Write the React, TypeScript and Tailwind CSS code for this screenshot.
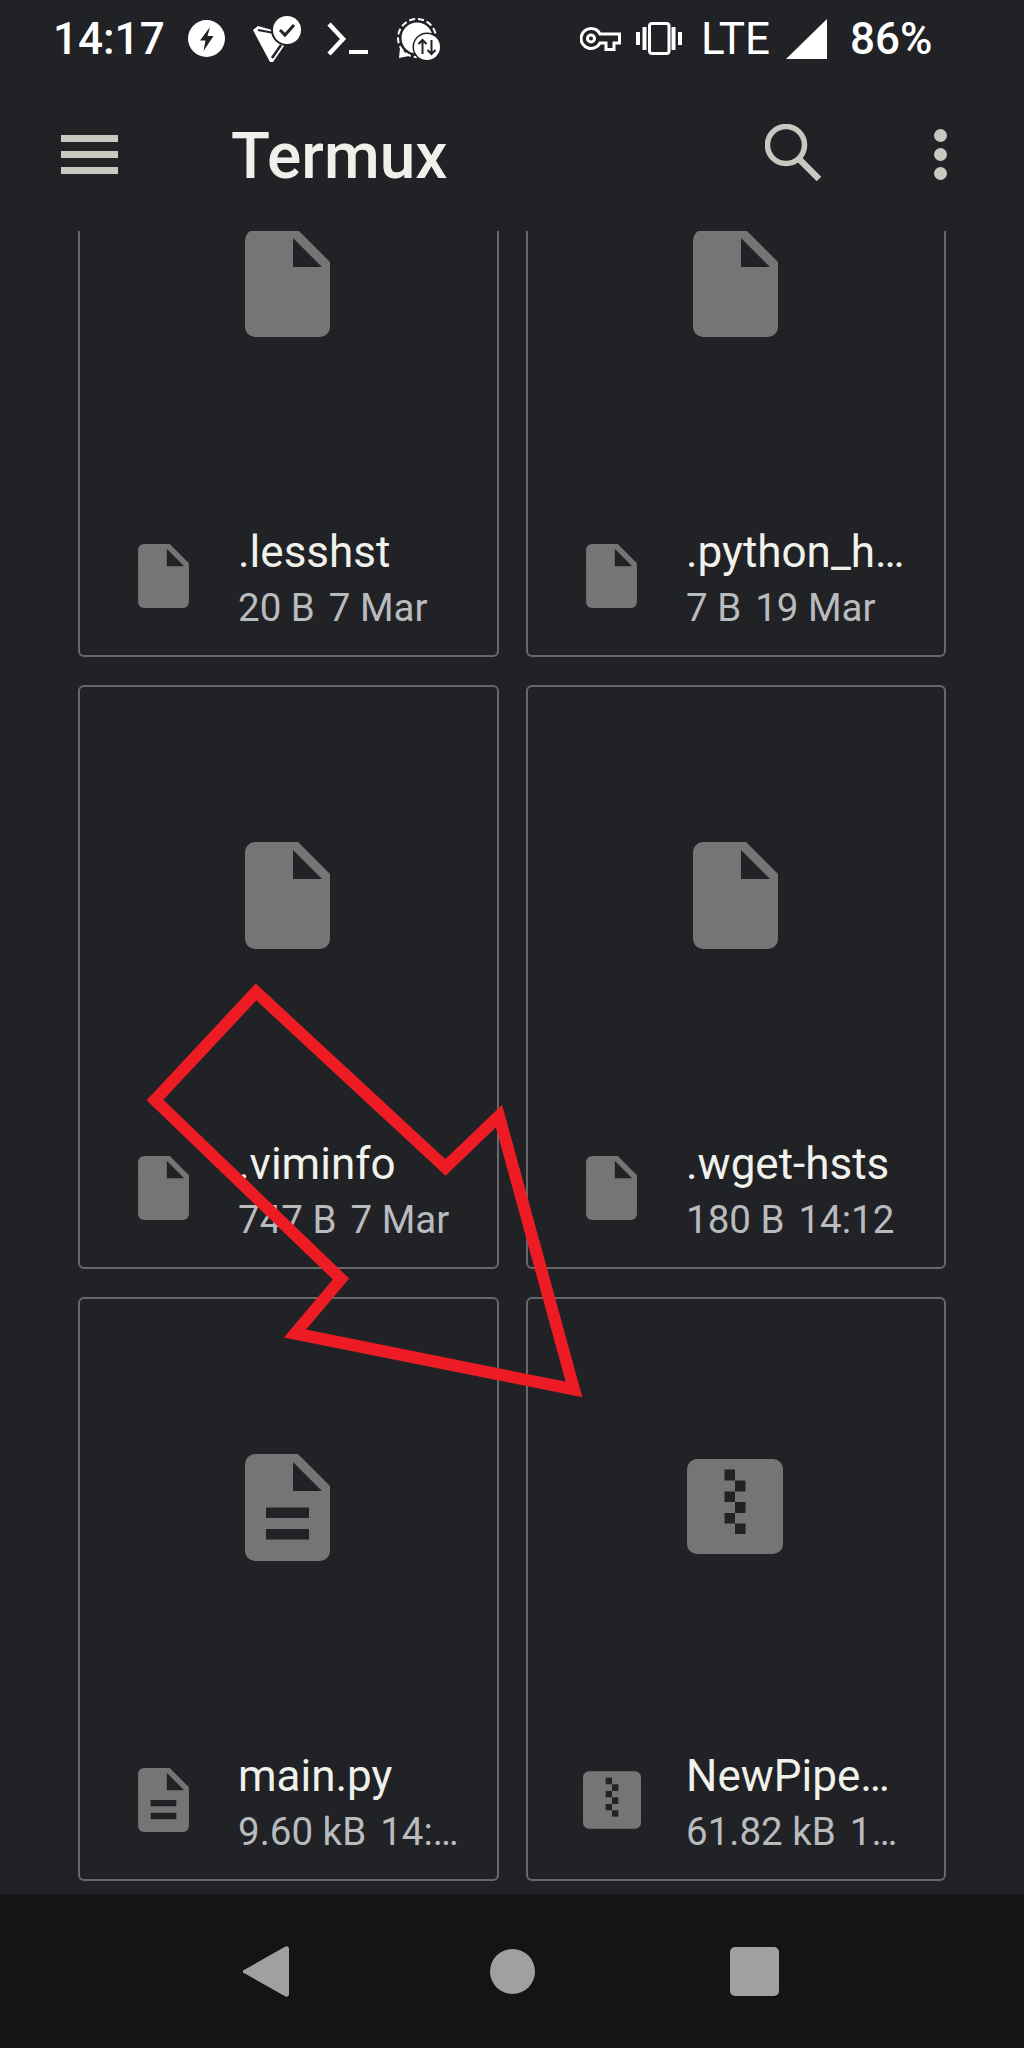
import React from "react";

type Kind = "file" | "doc" | "zip";

const files: { name: string; size: string; date: string; kind: Kind }[] = [
  { name: ".lesshst", size: "20 B", date: "7 Mar", kind: "file" },
  { name: ".python_h…", size: "7 B", date: "19 Mar", kind: "file" },
  { name: ".viminfo", size: "747 B", date: "7 Mar", kind: "file" },
  { name: ".wget-hsts", size: "180 B", date: "14:12", kind: "file" },
  { name: "main.py", size: "9.60 kB", date: "14:…", kind: "doc" },
  { name: "NewPipe…", size: "61.82 kB", date: "1…", kind: "zip" },
];

function FileIcon({ kind, small }: { kind: Kind; small?: boolean }) {
  if (kind === "zip") {
    return (
      <svg viewBox="0 0 96 95" className={small ? "h-[58px] w-[58px] shrink-0" : "-mt-[2px] h-[95px] w-[96px] shrink-0"}>
        <rect width="96" height="95" rx="10" fill="#757575" />
        <g fill="#212226">
          <rect x="37.5" y="10.5" width="10.5" height="11" />
          <rect x="48" y="21.5" width="10.5" height="11" />
          <rect x="37.5" y="32.5" width="10.5" height="10.5" />
          <rect x="48" y="43" width="10.5" height="11" />
          <rect x="37.5" y="54" width="10.5" height="10.5" />
          <rect x="48" y="64.5" width="10.5" height="10.5" />
        </g>
      </svg>
    );
  }
  return (
    <svg viewBox="0 0 85 107" className={small ? "h-[64px] w-[51px] shrink-0" : "h-[107px] w-[85px] shrink-0"}>
      <path
        d="M10 0H53L85 32V97a10 10 0 0 1-10 10H10a10 10 0 0 1-10-10V10a10 10 0 0 1 10-10Z"
        fill="#757575"
      />
      <path d="M48 8V37H77Z" fill="#212226" />
      {kind === "doc" && (
        <g fill="#212226">
          <rect x="21" y="53.5" width="43" height="10.5" />
          <rect x="21" y="75" width="43" height="10.5" />
        </g>
      )}
    </svg>
  );
}

function FileCard({ name, size, date, kind }: { name: string; size: string; date: string; kind: Kind }) {
  return (
    <div className="flex h-[584px] flex-col rounded-[6px] border-2 border-[#66686b] pb-[21px] pl-[58px]">
      <div className="-ml-[60px] mt-[155px] flex h-[107px] items-center justify-center">
        <FileIcon kind={kind} />
      </div>
      <div className="mt-auto flex">
        <div className="mt-[18px] flex h-[64px] w-[51px] shrink-0 items-center justify-center">
          <FileIcon kind={kind} small />
        </div>
        <div className="ml-[49px] min-w-0">
          <div className="text-[44px] leading-[53px] text-[#f0f1eb]">{name}</div>
          <div className="mt-[2px] flex gap-[14px] text-[38.5px] leading-[53px] text-[#b9bbbe]">
            <span>{size}</span>
            <span>{date}</span>
          </div>
        </div>
      </div>
    </div>
  );
}

function StatusBar() {
  return (
    <div className="flex h-[77px] items-center pl-[53px] text-[44px] leading-none font-medium text-white">
      <span className="w-[135px] shrink-0">14:17</span>

      {/* flash */}
      <svg viewBox="0 0 37 37" className="h-[37px] w-[37px] shrink-0">
        <circle cx="18.5" cy="18.5" r="18.5" fill="#fff" />
        <path d="M22 7 12 20.5h5.5L15.5 31 25.5 16H19.5L22 7Z" fill="#212226" />
      </svg>

      {/* filter check */}
      <svg viewBox="0 0 49 48" className="ml-[28px] h-[48px] w-[49px] shrink-0">
        <path d="M0 15 5 11 26 17 31 31 20 47 17 47Z" fill="#fff" />
        <path d="M5 15 21 18" stroke="#212226" strokeWidth="2" fill="none" />
        <path d="M19 43 28 30" stroke="#212226" strokeWidth="2.5" fill="none" />
        <circle cx="34" cy="15" r="16" fill="#212226" />
        <circle cx="34" cy="15" r="14" fill="#fff" />
        <path d="M27 15 32 20 41 10" stroke="#212226" strokeWidth="3" fill="none" />
      </svg>

      {/* terminal */}
      <svg viewBox="0 0 41 34" className="ml-[25px] h-[34px] w-[41px] shrink-0">
        <path d="M2 2 16 17 2 32" stroke="#fff" strokeWidth="4.5" fill="none" />
        <rect x="22" y="28" width="19" height="4" fill="#fff" />
      </svg>

      {/* signal */}
      <svg viewBox="0 0 44 44" className="ml-[29px] h-[44px] w-[44px] shrink-0">
        <circle cx="20" cy="21" r="19" stroke="#fff" strokeWidth="2" strokeDasharray="6 3" fill="none" />
        <circle cx="20" cy="21" r="15.5" fill="#fff" />
        <path d="M2 41 3 31 12 39Z" fill="#fff" />
        <circle cx="30" cy="30" r="14.5" fill="#212226" />
        <circle cx="30" cy="30" r="13" fill="#fff" />
        <path
          d="M25.500 37V23M21.500 27 25.500 23 29.500 27M34.500 23V37M30.500 33 34.500 37 38.500 33"
          stroke="#212226"
          strokeWidth="2"
          fill="none"
        />
      </svg>

      {/* key */}
      <svg viewBox="0 0 41 24" className="ml-[139px] h-[24px] w-[41px] shrink-0">
        <path
          d="M11 1.500a10 10 0 1 0 9 14.500h6v6.500h8V16h5.500V7H20a10 10 0 0 0-9-5.500Z"
          stroke="#fff"
          strokeWidth="3"
          fill="none"
        />
        <circle cx="11" cy="11.500" r="3.500" stroke="#fff" strokeWidth="3" fill="none" />
      </svg>

      {/* vibrate */}
      <svg viewBox="0 0 46 33" className="ml-[15px] h-[33px] w-[46px] shrink-0">
        <rect x="13.500" y="1.500" width="19.500" height="30" rx="2.500" stroke="#fff" strokeWidth="3" fill="none" />
        <rect x="0" y="10" width="4" height="13" fill="#fff" />
        <rect x="6.500" y="5" width="4" height="23" fill="#fff" />
        <rect x="35.500" y="5" width="4" height="23" fill="#fff" />
        <rect x="42" y="10" width="4" height="13" fill="#fff" />
      </svg>

      <span className="ml-[19px] w-[73px] shrink-0 font-normal">LTE</span>

      <svg viewBox="0 0 41 40" className="ml-[12px] h-[40px] w-[41px] shrink-0">
        <path d="M0 40 41 0V40Z" fill="#fff" />
      </svg>

      <span className="ml-[23px] shrink-0">86%</span>
    </div>
  );
}

function Toolbar() {
  return (
    <div className="flex h-[154px] items-center pl-[61px] pr-[77px]">
      <svg viewBox="0 0 57 39" className="h-[39px] w-[57px] shrink-0">
        <g fill="#c5c9c0">
          <rect width="57" height="7" />
          <rect y="16" width="57" height="7" />
          <rect y="32" width="57" height="7" />
        </g>
      </svg>
      <span className="ml-[113px] mt-[6px] text-[64px] leading-none font-medium text-[#eff0ea]">Termux</span>
      <svg viewBox="0 0 56 57" className="ml-auto -mt-[4px] h-[57px] w-[56px] shrink-0">
        <circle cx="21" cy="21" r="18.500" stroke="#c5c9c0" strokeWidth="5.500" fill="none" />
        <path d="M34 35 54 55" stroke="#c5c9c0" strokeWidth="6.500" fill="none" />
      </svg>
      <div className="ml-[113px] flex shrink-0 flex-col gap-[6px]">
        <div className="h-[13px] w-[13px] rounded-full bg-[#c5c9c0]" />
        <div className="h-[13px] w-[13px] rounded-full bg-[#c5c9c0]" />
        <div className="h-[13px] w-[13px] rounded-full bg-[#c5c9c0]" />
      </div>
    </div>
  );
}

function NavBar() {
  return (
    <div className="flex h-[154px] shrink-0 items-center bg-[#131416] pl-[243px]">
      <svg viewBox="0 0 46 51" className="h-[51px] w-[46px] shrink-0">
        <path d="M1 24 42.500 .5a2.500 2.500 0 0 1 3.500 2.500V48a2.500 2.500 0 0 1-3.500 2.500L1 27a1.500 1.500 0 0 1 0-3Z" fill="#a0a0a2" />
      </svg>
      <div className="ml-[201px] h-[45px] w-[45px] shrink-0 rounded-full bg-[#a0a0a2]" />
      <div className="ml-[195px] h-[49px] w-[49px] shrink-0 rounded-[5px] bg-[#a0a0a2]" />
    </div>
  );
}

export default function App() {
  return (
    <div className="relative flex h-[2048px] w-[1024px] flex-col overflow-hidden bg-[#212226] font-['Roboto',sans-serif]">
      <StatusBar />
      <Toolbar />

      <div className="min-h-0 flex-1 overflow-hidden">
        <div className="-mt-[158px] ml-[78px] grid grid-cols-[421px_420px] gap-x-[27px] gap-y-[28px]">
          {files.map((f) => (
            <FileCard key={f.name} {...f} />
          ))}
        </div>
      </div>

      <NavBar />

      {/* red arrow drawn on top of the screenshot */}
      <svg viewBox="0 0 1024 2048" className="pointer-events-none absolute inset-0 h-[2048px] w-[1024px]">
        <path
          d="M256 992 445.500 1167.400 499 1116 574 1389.500 295 1333.500 341 1279 155 1100Z"
          stroke="#ed1c24"
          strokeWidth="12"
          strokeMiterlimit="10"
          fill="none"
        />
      </svg>
    </div>
  );
}
